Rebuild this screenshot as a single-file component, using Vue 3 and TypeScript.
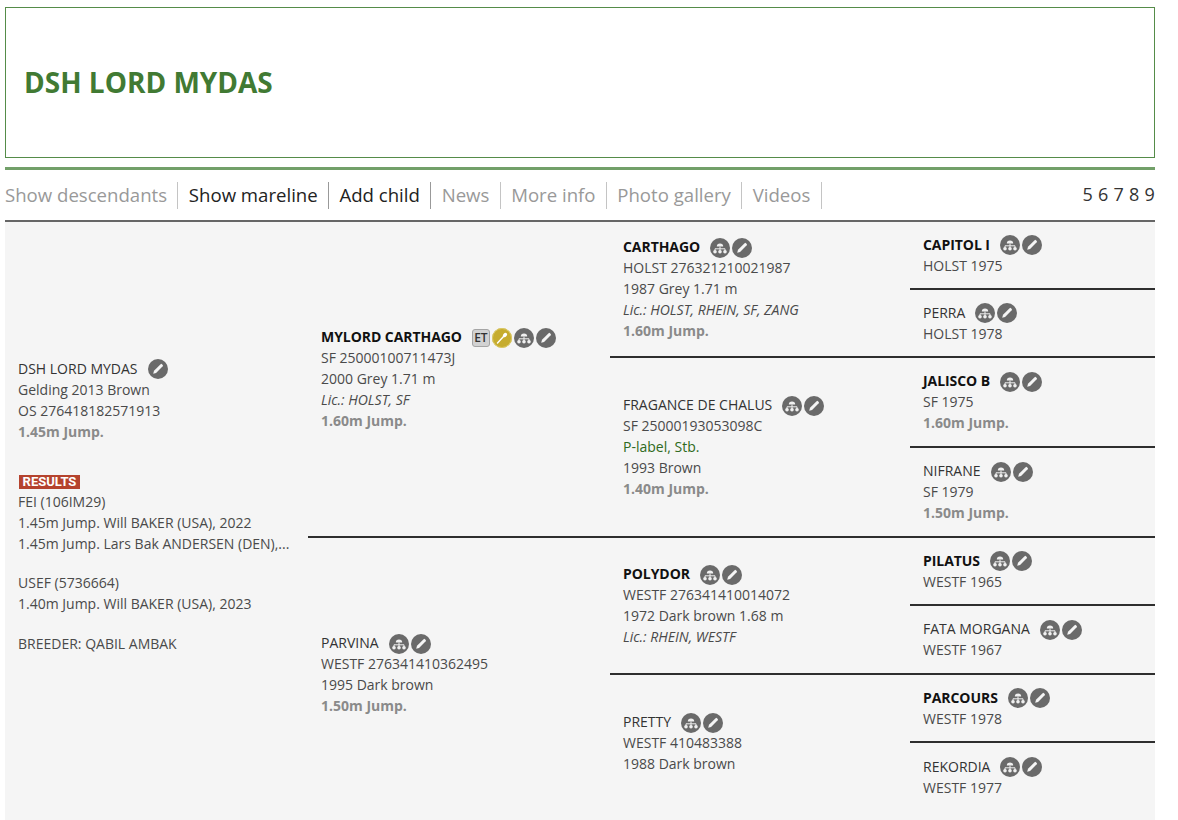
<script setup lang="ts">
interface Horse {
  name: string
  strong?: boolean
  et?: boolean
  gold?: boolean
  lines: { text: string; kind?: 'lic' | 'label' | 'level' }[]
  col: number
  row: string
  last?: boolean
}

const nav = [
  { label: 'Show descendants', on: false },
  { label: 'Show mareline', on: true },
  { label: 'Add child', on: true },
  { label: 'News', on: false },
  { label: 'More info', on: false },
  { label: 'Photo gallery', on: false },
  { label: 'Videos', on: false },
]

const horses: Horse[] = [
  { name: 'MYLORD CARTHAGO', strong: true, et: true, gold: true, col: 2, row: '1 / 5', lines: [
    { text: 'SF 25000100711473J' }, { text: '2000 Grey 1.71 m' }, { text: 'Lic.: HOLST, SF', kind: 'lic' }, { text: '1.60m Jump.', kind: 'level' } ] },
  { name: 'PARVINA', col: 2, row: '5 / 9', last: true, lines: [
    { text: 'WESTF 276341410362495' }, { text: '1995 Dark brown' }, { text: '1.50m Jump.', kind: 'level' } ] },
  { name: 'CARTHAGO', strong: true, col: 3, row: '1 / 3', lines: [
    { text: 'HOLST 276321210021987' }, { text: '1987 Grey 1.71 m' }, { text: 'Lic.: HOLST, RHEIN, SF, ZANG', kind: 'lic' }, { text: '1.60m Jump.', kind: 'level' } ] },
  { name: 'FRAGANCE DE CHALUS', col: 3, row: '3 / 5', lines: [
    { text: 'SF 25000193053098C' }, { text: 'P-label, Stb.', kind: 'label' }, { text: '1993 Brown' }, { text: '1.40m Jump.', kind: 'level' } ] },
  { name: 'POLYDOR', strong: true, col: 3, row: '5 / 7', lines: [
    { text: 'WESTF 276341410014072' }, { text: '1972 Dark brown 1.68 m' }, { text: 'Lic.: RHEIN, WESTF', kind: 'lic' } ] },
  { name: 'PRETTY', col: 3, row: '7 / 9', last: true, lines: [
    { text: 'WESTF 410483388' }, { text: '1988 Dark brown' } ] },
  { name: 'CAPITOL I', strong: true, col: 4, row: '1', lines: [{ text: 'HOLST 1975' }] },
  { name: 'PERRA', col: 4, row: '2', lines: [{ text: 'HOLST 1978' }] },
  { name: 'JALISCO B', strong: true, col: 4, row: '3', lines: [{ text: 'SF 1975' }, { text: '1.60m Jump.', kind: 'level' }] },
  { name: 'NIFRANE', col: 4, row: '4', lines: [{ text: 'SF 1979' }, { text: '1.50m Jump.', kind: 'level' }] },
  { name: 'PILATUS', strong: true, col: 4, row: '5', lines: [{ text: 'WESTF 1965' }] },
  { name: 'FATA MORGANA', col: 4, row: '6', lines: [{ text: 'WESTF 1967' }] },
  { name: 'PARCOURS', strong: true, col: 4, row: '7', lines: [{ text: 'WESTF 1978' }] },
  { name: 'REKORDIA', col: 4, row: '8', last: true, lines: [{ text: 'WESTF 1977' }] },
]
</script>

<template>
  <div class="page">
    <header class="title-box"><h1>DSH LORD MYDAS</h1></header>
    <div class="green-rule"></div>

    <nav class="nav">
      <ul class="links">
        <li v-for="item in nav" :key="item.label" :class="{ on: item.on }">{{ item.label }}</li>
      </ul>
      <div class="gens">5 6 7 8 9</div>
    </nav>

    <main class="tree-wrap">
      <div class="tree">
        <section class="cell subject">
          <div class="name">DSH LORD MYDAS
            <svg class="ic first" viewBox="0 0 20 20"><circle cx="10" cy="10" r="10" fill="#6a6a6a" /><path d="M5.2 14.8l.8-3 6.6-6.6a1 1 0 0 1 1.4 0l.7.7a1 1 0 0 1 0 1.4L8.1 14z" fill="#f5f5f5" /></svg>
          </div>
          <div>Gelding 2013 Brown</div>
          <div>OS 276418182571913</div>
          <div class="level">1.45m Jump.</div>
          <div class="results"><span>RESULTS</span></div>
          <div>FEI (106IM29)</div>
          <div>1.45m Jump. Will BAKER (USA), 2022</div>
          <div>1.45m Jump. Lars Bak ANDERSEN (DEN),...</div>
          <div class="gap">USEF (5736664)</div>
          <div>1.40m Jump. Will BAKER (USA), 2023</div>
          <div class="gap breeder">BREEDER: QABIL AMBAK</div>
        </section>

        <section
          v-for="h in horses"
          :key="h.name"
          class="cell"
          :class="{ ruled: !h.last }"
          :style="{ gridColumn: h.col, gridRow: h.row }"
        >
          <div class="name" :class="{ strong: h.strong }">
            <span>{{ h.name }}</span>
            <span class="icons">
              <span v-if="h.et" class="et">ET</span>
              <svg v-if="h.gold" class="ic" viewBox="0 0 20 20"><circle cx="10" cy="10" r="10" fill="#c6ac2e" /><circle cx="10" cy="10" r="9.5" fill="none" stroke="#dccb6a" /><path d="M5.5 15L11.5 8.5" stroke="#fff" stroke-width="1.4" stroke-linecap="round" /><ellipse cx="13" cy="7" rx="2.4" ry="1.8" transform="rotate(-45 13 7)" fill="#fff" /></svg>
              <svg class="ic" viewBox="0 0 20 20"><circle cx="10" cy="10" r="10" fill="#6a6a6a" /><path d="M6.8 8.6a3.2 3.2 0 0 1 6.4 0z" fill="#f0f0f0" /><path d="M5 13v-2.2h10V13M10 8.6V13" fill="none" stroke="#f0f0f0" stroke-width="1" /><circle cx="5" cy="13.8" r="1.8" fill="#f0f0f0" /><circle cx="10" cy="13.8" r="1.8" fill="#f0f0f0" /><circle cx="15" cy="13.8" r="1.8" fill="#f0f0f0" /></svg>
              <svg class="ic" viewBox="0 0 20 20"><circle cx="10" cy="10" r="10" fill="#6a6a6a" /><path d="M5.2 14.8l.8-3 6.6-6.6a1 1 0 0 1 1.4 0l.7.7a1 1 0 0 1 0 1.4L8.1 14z" fill="#f5f5f5" /></svg>
            </span>
          </div>
          <div v-for="l in h.lines" :key="l.text" :class="l.kind">{{ l.text }}</div>
        </section>
      </div>
    </main>
  </div>
</template>

<style>
html, body { margin: 0; background: #fff; }
</style>

<style scoped>
.page {
  width: 1150px;
  margin-left: 5px;
  padding-top: 7px;
  font-family: "Open Sans", "DejaVu Sans", sans-serif;
  font-size: 14px;
  line-height: 21px;
  color: #4a4a4a;
}
.title-box {
  box-sizing: border-box;
  height: 151px;
  border: 1px solid #558c49;
  display: flex;
  align-items: center;
  padding: 0 0 2px 18px;
}
h1 {
  margin: 0;
  font-size: 28px;
  font-weight: 700;
  line-height: 36px;
  color: #417a33;
}
.green-rule {
  height: 3px;
  margin-top: 9px;
  background: #72a069;
}
.nav {
  display: flex;
  justify-content: space-between;
  align-items: center;
  height: 27px;
  margin-top: 12px;
  font-size: 18.6px;
  color: #999;
}
.links {
  display: flex;
  list-style: none;
  margin: 0;
  padding: 0;
}
.links li {
  height: 27px;
  line-height: 25px;
  padding: 0 10.4px;
  border-right: 1px solid #c4c4c4;
  white-space: nowrap;
}
.links li:first-child { padding-left: 0; }
.links li.on { color: #222; border-right-color: #999; }
.gens {
  color: #333;
  font-size: 18px;
  line-height: 25px;
  height: 27px;
  letter-spacing: 0.25px;
}
.tree-wrap {
  margin-top: 11px;
  border-top: 2px solid #666;
  background: #f5f5f5;
  padding-bottom: 9px;
}
.tree {
  display: grid;
  grid-template-columns: 303px 302px 300px 245px;
  grid-template-rows: 68px 68px 90px 90px 68px 69px 68px 68px;
}
.cell {
  box-sizing: border-box;
  display: flex;
  flex-direction: column;
  justify-content: center;
  padding-left: 13px;
  padding-bottom: 1px;
  white-space: nowrap;
  min-width: 0;
}
.ruled { border-bottom: 2px solid #2e2e2e; }
.subject {
  grid-column: 1;
  grid-row: 1 / 9;
  padding-bottom: 22px;
}
.name {
  display: flex;
  align-items: center;
  height: 21px;
  color: #333;
}
.name.strong { font-weight: 700; color: #111; letter-spacing: -0.06px; }
.icons {
  display: flex;
  align-items: center;
  gap: 2px;
  margin: 2px 0 0 10px;
  letter-spacing: 0;
}
.ic {
  display: block;
  width: 20px;
  height: 20px;
  flex: none;
}
.ic.first { margin: 2px 0 0 10px; }
.et {
  box-sizing: border-box;
  width: 18px;
  height: 18px;
  border: 1px solid #a5a5a5;
  border-radius: 3px;
  background: #d2d2d2;
  font-size: 12px;
  line-height: 16px;
  font-weight: 600;
  text-align: center;
  color: #333;
}
.level { font-weight: 700; color: #8a8a8a; }
.lic { font-style: italic; }
.label { color: #2f6a20; }
.results {
  height: 18px;
  margin-top: 31px;
  display: flex;
  align-items: center;
}
.results span {
  display: block;
  height: 14px;
  width: 61px;
  margin-left: 1px;
  background: #b5432e;
  color: #fff;
  font-family: Roboto, "Liberation Sans", sans-serif;
  font-size: 13px;
  font-weight: 700;
  line-height: 14px;
  text-align: center;
}
.gap { margin-top: 18px; }
.breeder { margin-top: 19px; }
</style>
